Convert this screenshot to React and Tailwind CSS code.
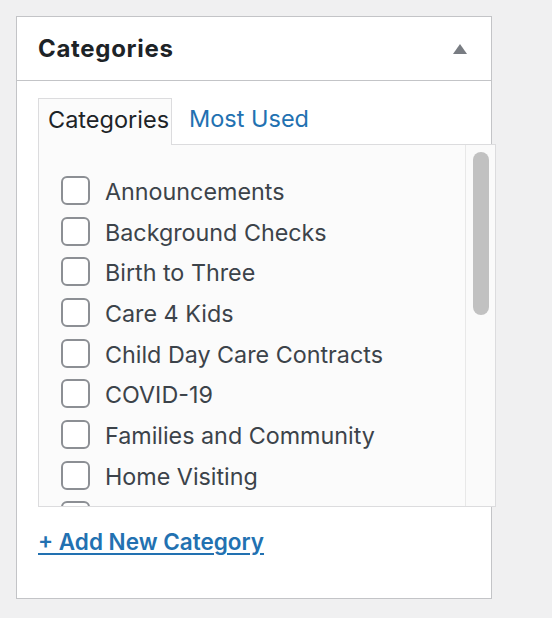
import React from 'react';

const items = [
    'Announcements',
    'Background Checks',
    'Birth to Three',
    'Care 4 Kids',
    'Child Day Care Contracts',
    'COVID-19',
    'Families and Community',
    'Home Visiting',
    '',
];

export default function App() {
    return (
        <div className="min-h-screen bg-[#f0f0f1] pt-4 pl-4" style={{ fontFamily: 'Inter, "Liberation Sans", sans-serif' }}>
            <div className="w-[476px] h-[583px] border border-[#c3c4c7] bg-white">
                <div className="h-[64px] border-b border-[#c3c4c7] flex items-center justify-between pl-[21px] pr-[24px]">
                    <h2 className="text-[24px] font-bold text-[#1d2327] tracking-[0.7px]">Categories</h2>
                    <svg width="14" height="10" viewBox="0 0 14 10" className="mt-[1px]">
                        <path d="M7 0 L14 10 L0 10 Z" fill="#787c82" />
                    </svg>
                </div>

                <div className="pl-[21px] pt-[17px]">
                    <div className="flex items-end">
                        <div className="relative z-10 -mb-px h-[47px] w-[134px] border border-b-0 border-[#dcdcde] bg-[#fbfbfb] pl-[9px] pb-[4px] flex items-center text-[23.5px] text-[#1d2327]">
                            Categories
                        </div>
                        <a href="#" className="h-[46px] pl-[17px] pb-[4px] flex items-center text-[23.5px] text-[#2271b1]">
                            Most Used
                        </a>
                    </div>

                    <div className="w-[458px] h-[363px] border border-[#dcdcde] bg-[#fbfbfb] flex overflow-hidden">
                        <ul className="flex-1 overflow-hidden pl-[22px] pt-[25px]">
                            {items.map((name, i) => (
                                <li key={i} className="h-[40.7px] flex items-center">
                                    <span className="w-[29px] h-[29px] rounded-[6px] border-2 border-[#8c8f94] bg-white shrink-0" />
                                    {name && <span className="ml-[15px] text-[23.3px] text-[#3c434a] mt-[4px]">{name}</span>}
                                </li>
                            ))}
                        </ul>
                        <div className="w-[30px] border-l border-[#e8e8e8] bg-[#fafafa] flex justify-center pt-[7px]">
                            <div className="w-[16px] h-[163px] rounded-full bg-[#c1c1c1]" />
                        </div>
                    </div>

                    <a href="#" className="inline-block mt-[18px] text-[22.5px] font-semibold text-[#2271b1] underline underline-offset-[3px]">
                        + Add New Category
                    </a>
                </div>
            </div>
        </div>
    );
}
